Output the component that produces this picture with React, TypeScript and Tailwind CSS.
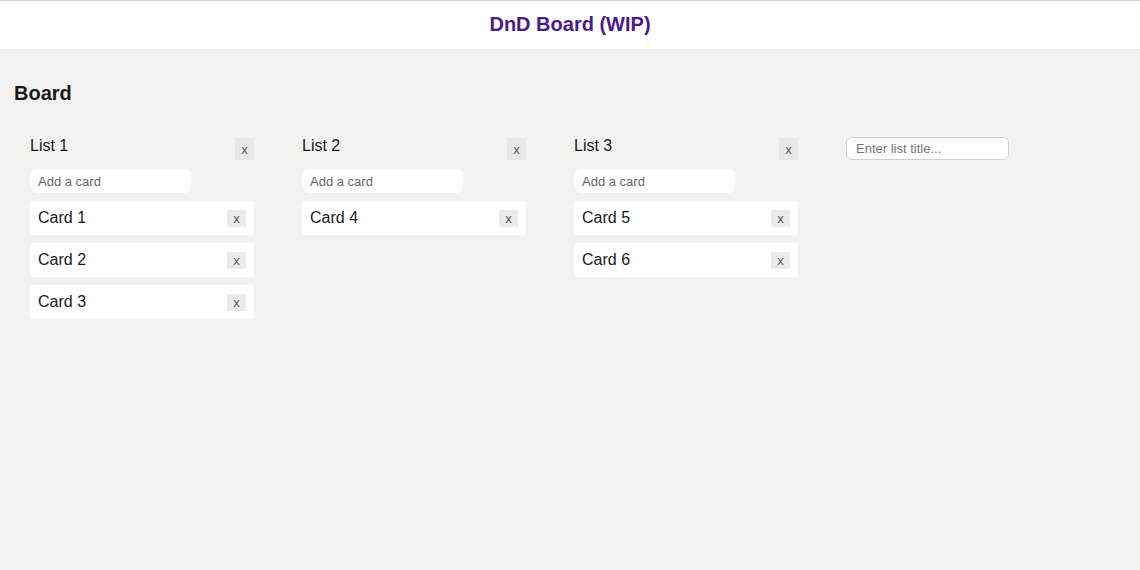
import type { ReactElement } from "react";
import { useState } from "react";

type Card = { id: number; title: string };
type List = { id: number; title: string; cards: Card[] };

const initialLists: List[] = [
  {
    id: 1,
    title: "List 1",
    cards: [
      { id: 1, title: "Card 1" },
      { id: 2, title: "Card 2" },
      { id: 3, title: "Card 3" },
    ],
  },
  { id: 2, title: "List 2", cards: [{ id: 4, title: "Card 4" }] },
  {
    id: 3,
    title: "List 3",
    cards: [
      { id: 5, title: "Card 5" },
      { id: 6, title: "Card 6" },
    ],
  },
];

function ListColumn({
  list,
  onRemove,
  onRemoveCard,
}: {
  list: List;
  onRemove: () => void;
  onRemoveCard: (cardId: number) => void;
}): ReactElement {
  return (
    <div className="w-[224px] shrink-0">
      <div className="flex items-start justify-between h-[24px]">
        <h3 className="pt-[1px] text-[16px] leading-[18px] text-[#1a1a1a]">{list.title}</h3>
        <button
          type="button"
          onClick={onRemove}
          className="mt-[2px] w-[19px] h-[22px] bg-[#e8e8e8] text-[13px] leading-none text-[#555]"
        >
          x
        </button>
      </div>
      <input
        type="text"
        placeholder="Add a card"
        className="mt-[9px] block w-[161px] h-[24px] rounded-[7px] bg-white pl-2 text-[13px] placeholder:text-[#666] focus:outline-none"
      />
      <div className="mt-2 flex flex-col gap-2">
        {list.cards.map((card) => (
          <div
            key={card.id}
            className="flex items-center justify-between h-[34px] rounded-[4px] bg-white pl-2 pr-2"
          >
            <span className="text-[16px] text-[#1a1a1a]">{card.title}</span>
            <button
              type="button"
              onClick={() => onRemoveCard(card.id)}
              className="w-[19px] h-[17px] bg-[#ebebeb] text-[13px] leading-none text-[#555]"
            >
              x
            </button>
          </div>
        ))}
      </div>
    </div>
  );
}

export default function App(): ReactElement {
  const [lists, setLists] = useState<List[]>(initialLists);

  return (
    <div
      className="min-h-[570px] bg-[#f2f2f2] border-t border-[#d4d4d4]"
      style={{ fontFamily: '"Liberation Sans", Arial, sans-serif' }}
    >
      <header className="h-12 bg-white flex items-center justify-center">
        <h1 className="mb-[2px] text-[20px] font-bold text-[#4a1a8c]">DnD Board (WIP)</h1>
      </header>
      <main className="px-[14px]">
        <h2 className="pt-8 text-[20px] leading-[24px] font-bold text-[#1a1a1a]">Board</h2>
        <div className="mt-[31px] pl-4 flex items-start gap-12">
          {lists.map((list) => (
            <ListColumn
              key={list.id}
              list={list}
              onRemove={() => setLists((ls) => ls.filter((l) => l.id !== list.id))}
              onRemoveCard={(cardId) =>
                setLists((ls) =>
                  ls.map((l) =>
                    l.id === list.id
                      ? { ...l, cards: l.cards.filter((c) => c.id !== cardId) }
                      : l
                  )
                )
              }
            />
          ))}
          <input
            type="text"
            placeholder="Enter list title..."
            className="mt-[1px] block w-[163px] h-[23px] rounded-[6px] border border-[#cfcfcf] bg-white pl-[9px] text-[13px] placeholder:text-[#757575] focus:outline-none"
          />
        </div>
      </main>
    </div>
  );
}
